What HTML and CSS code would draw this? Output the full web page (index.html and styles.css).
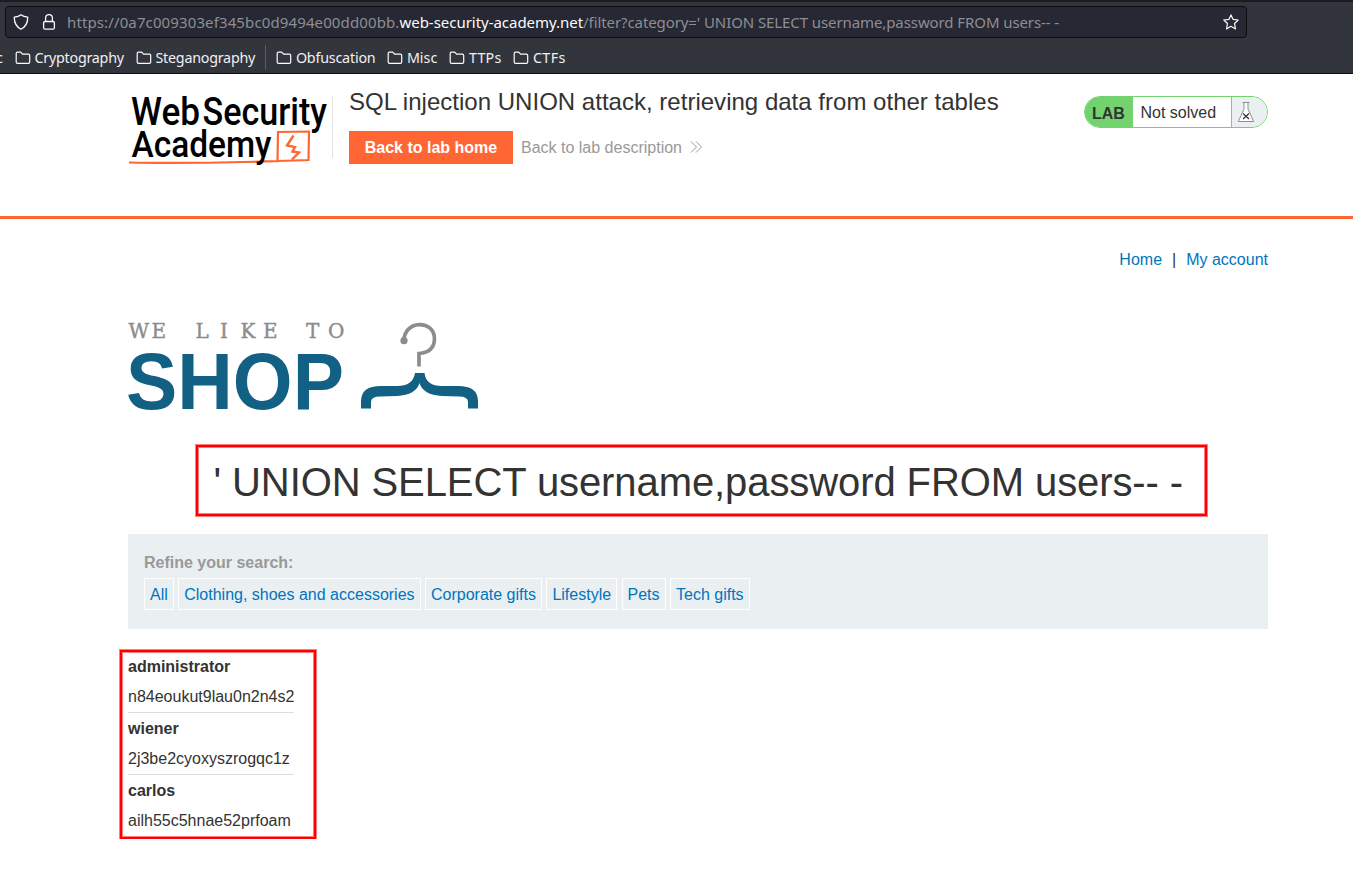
FILE: index.html
```html
<!DOCTYPE html>
<html lang="en">
<head>
<meta charset="utf-8">
<title>SQL injection UNION attack</title>
<link rel="stylesheet" href="styles.css">
</head>
<body>
<svg class="defs" width="0" height="0"><defs>
<symbol id="folder" viewBox="0 0 16 16"><path d="M1.2 12V3.4Q1.2 2.2 2.4 2.2H5.6L7.6 4.2H13.4Q14.7 4.2 14.7 5.5V12Q14.7 13.3 13.4 13.3H2.5Q1.2 13.3 1.2 12Z" fill="none" stroke="#fbfbfe" stroke-width="1.2"/></symbol>
</defs></svg>
<div class="browser">
  <div class="urlbar">
    <svg class="shield" width="16" height="16" viewBox="0 0 16 16"><path d="M8 .8Q10.5 2.8 14.7 3.2Q15 11.5 8 15.2Q1 11.5 1.3 3.2Q5.500 2.800 8 .8Z" fill="none" stroke="#fbfbfe" stroke-width="1.3" stroke-linejoin="round"/></svg>
    <svg class="lock" width="16" height="16" viewBox="0 0 16 16"><rect x="2.600" y="7.500" width="10.800" height="7.700" rx="1.500" fill="none" stroke="#fbfbfe" stroke-width="1.300"/><path d="M4.600 7.500V4A3.400 3.400 0 0 1 11.400 4V7.500" fill="none" stroke="#fbfbfe" stroke-width="1.300"/></svg>
    <span class="url"><span class="u1">https://0a7c009303ef345bc0d9494e00dd00bb.</span><span class="host">web-security-academy.net</span><span class="u2">/filter?category=' UNION SELECT username,password FROM users-- -</span></span>
    <svg class="star" width="16" height="16" viewBox="0 0 16 16"><path d="M8 .9L10.100 5.400L15.200 6L11.500 9.500L12.500 14.900L8 12.300L3.500 14.900L4.500 9.500L.8 6L5.900 5.400Z" fill="none" stroke="#fbfbfe" stroke-width="1.200" stroke-linejoin="round"/></svg>
  </div>
  <div class="bookmarks">
    <span class="cut">c</span>
    <span class="bm b1"><svg><use href="#folder"/></svg>Cryptography</span>
    <span class="bm b2"><svg><use href="#folder"/></svg>Steganography</span>
    <span class="sep"></span>
    <span class="bm b3"><svg><use href="#folder"/></svg>Obfuscation</span>
    <span class="bm b4"><svg><use href="#folder"/></svg>Misc</span>
    <span class="bm b5"><svg><use href="#folder"/></svg>TTPs</span>
    <span class="bm b6"><svg><use href="#folder"/></svg>CTFs</span>
  </div>
</div>
<header class="lab-header">
  <svg class="academy" width="204" height="80" viewBox="128 90 204 80">
    <path d="M129 162.500Q180 163.800 277.500 161.200L278 132L309 131.500L308.500 160L278 161" fill="none" stroke="#ff6633" stroke-width="2.200"/>
    <path d="M293.500 135.500L287 145.500L295 147L292.500 151.500L299 152.500L292 159.500" fill="none" stroke="#ff6633" stroke-width="2.400"/>
    <text class="logo-text" x="131" y="124.700" font-size="38.500" textLength="69" lengthAdjust="spacingAndGlyphs">Web</text>
    <text class="logo-text" x="202.500" y="124.700" font-size="38.500" textLength="124.500" lengthAdjust="spacingAndGlyphs">Security</text>
    <text class="logo-text" x="131.500" y="157" font-size="37.500" textLength="140" lengthAdjust="spacingAndGlyphs">Academy</text>
  </svg>
  <div class="title">
    <h2>SQL injection UNION attack, retrieving data from other tables</h2>
    <div class="actions"><a class="button">Back to lab home</a><a class="desc">Back to lab description</a><svg width="13" height="12" viewBox="0 0 13 12"><path d="M1 .5L6.500 6L1 11.500M6 .5L11.500 6L6 11.500" fill="none" stroke="#999" stroke-width="1"/></svg></div>
  </div>
  <div class="status"><b>LAB</b><span>Not solved</span><i><svg width="18" height="22" viewBox="0 0 18 22"><path d="M5.500 1.500H12.500M7 1.500V8L1.300 20.500H16.700L11 8V1.500" fill="#fff" stroke="#8b8f91" stroke-width="1"/><path d="M6 12.500L12 18M12 12.500L6 18" stroke="#333" stroke-width="1.200"/></svg></i></div>
</header>
<main>
  <nav><a>Home</a><span>|</span><a>My account</a></nav>
  <svg class="shop" width="352" height="92" viewBox="128 320 352 92">
    <text class="tag" x="128.500 151.500 195.500 220 240.500 263 306 328" y="337.500">WELIKETO</text>
    <text class="big" x="126" y="408.500" font-size="80.500" textLength="218" lengthAdjust="spacingAndGlyphs">SHOP</text>
    <path d="M404 340.500C404 320 434.500 319 434.500 339Q434 352.500 419 353.500V366.500" fill="none" stroke="#8c8c8c" stroke-width="3.700"/>
    <circle cx="404" cy="340.700" r="3.600" fill="#8c8c8c"/>
    <path d="M415 373H424.500Q426 386 442 386H458Q478 386 478 401V408.500H468V402Q468 396.500 459 396.500L442 396Q423 395 419.500 383Q416 395 397 396L380 396.500Q371 396.500 371 402V408.500H361V401Q361 386 381 386H397Q413 386 415 373Z" fill="#126084"/>
  </svg>
  <div class="heading marked"><h1>' UNION SELECT username,password FROM users-- -</h1></div>
  <section class="filters">
    <label>Refine your search:</label>
    <div class="chips"><a>All</a><a>Clothing, shoes and accessories</a><a>Corporate gifts</a><a>Lifestyle</a><a>Pets</a><a>Tech gifts</a></div>
  </section>
  <div class="results marked">
    <dl><dt>administrator</dt><dd>n84eoukut9lau0n2n4s2</dd><dt>wiener</dt><dd>2j3be2cyoxyszrogqc1z</dd><dt>carlos</dt><dd>ailh55c5hnae52prfoam</dd></dl>
  </div>
</main>
</body>
</html>
```
FILE: styles.css
```css
* { box-sizing: border-box; }
body { margin: 0; background: #fff; color: #333332; font: 16px/20px "Liberation Sans", Arial, sans-serif; overflow: hidden; }
.defs { position: absolute; }
.browser { height: 74px; background: #33353d; border-top: 2px solid #1c1b22; border-bottom: 1px solid #0c0c0d; padding-top: 4px; font-family: "Noto Sans", sans-serif; color: #fbfbfe; }
.urlbar { width: 1242px; height: 32px; margin-left: 5px; background: #262833; border: 1px solid #0c0c0d; border-radius: 4px; display: flex; align-items: center; padding: 0 7px; }
.urlbar svg { flex: none; }
.lock { margin-left: 12px; }
.url { margin-left: 10px; flex: 1; color: #8d8e95; font-size: 15px; white-space: pre; }
.u1 { letter-spacing: .12px; }
.host { color: #fbfbfe; letter-spacing: -.03px; }
.u2 { letter-spacing: -.09px; }
.bookmarks { height: 35px; display: flex; align-items: center; font-size: 14.300px; white-space: nowrap; padding-top: 4px; color: #f0f0f3; }
.cut { width: 15px; text-indent: -4px; }
.bm { display: flex; align-items: center; gap: 3.500px; }
.bm svg { width: 16px; height: 16px; flex: none; }
.b1 { width: 121px; letter-spacing: -.24px; }
.b2 { width: 129px; letter-spacing: -.24px; }
.sep { width: 1px; height: 25px; background: #5b5c63; margin-right: 10.400px; }
.b3 { width: 111px; letter-spacing: -.2px; }
.b4 { width: 62px; }
.b5 { width: 64px; letter-spacing: .25px; }
.b6 { letter-spacing: .4px; }
.lab-header { height: 145px; border-bottom: 3px solid #ff6633; padding: 16px 85px 0 128px; display: flex; align-items: flex-start; }
.academy { flex: none; }
.logo-text { font-family: Roboto, sans-serif; font-weight: 500; fill: #000; }
.title { border-left: 1px solid #e3e3e3; height: 62px; margin: 6px 0 0; padding-left: 16px; flex: 1; }
h2 { margin: -10px 0 0; font-size: 24px; line-height: 32px; font-weight: 400; white-space: nowrap; letter-spacing: .016px; }
.actions { display: flex; align-items: center; margin-top: 13px; color: #999; }
.button { width: 164px; height: 33px; line-height: 33px; background: #ff6633; color: #fff; font-weight: 700; text-align: center; margin-right: 8px; }
.actions svg { margin: 0 0 2px 8px; }
.status { width: 184px; height: 32px; margin-top: 6px; border: 1px solid #72d36e; border-radius: 16px; display: flex; line-height: 32px; overflow: hidden; }
.status b { width: 48px; background: #72d36e; padding-left: 7px; line-height: 33px; }
.status span { width: 98px; padding-left: 7.500px; line-height: 31px; }
.status i { flex: 1; background: #eaeff2; border-left: 1px solid #72d36e; padding: 4px 0 0 5px; line-height: 0; }
main { width: 1140px; margin-left: 128px; }
nav { height: 101px; padding-top: 31px; display: flex; justify-content: flex-end; gap: 10px; }
nav a, .chips a { color: #0074bd; }
.shop { display: block; overflow: visible; }
.tag { font-family: "DejaVu Serif", serif; font-weight: 200; font-size: 20px; fill: #8c8c8c; stroke: #8c8c8c; stroke-width: .4px; }
.big { font-family: "Liberation Sans", sans-serif; font-weight: 700; fill: #126084; }
.marked { border: 2px solid #ff0000; box-shadow: 0 0 0 1px rgba(255,0,0,.5), inset 0 0 0 1px rgba(255,0,0,.5); }
.heading { width: 1011px; height: 71px; margin: 33px 0 0 68px; padding-left: 15.500px; }
h1 { margin: 0; font-size: 40px; line-height: 70px; font-weight: 400; white-space: nowrap; letter-spacing: -.09px; }
.filters { height: 95px; margin-top: 18px; padding: 19px 16px; background: #eaeff2; }
.filters label { display: block; color: #999; font-weight: 700; }
.chips { display: flex; gap: 4.450px; margin-top: 5px; }
.chips a { height: 32px; line-height: 31px; padding: 0 5px; border: 1px solid #fff; white-space: nowrap; }
.results { width: 196px; height: 189px; margin: 21px 0 0 -8px; padding: 1px 0 0 6px; }
dl { width: 166px; margin: 0; }
dt { font-weight: 700; height: 30px; line-height: 27px; }
dd { margin: 0 0 2px; height: 30px; line-height: 27px; border-bottom: 1px solid #ddd; }
dd:last-child { border: 0; }
```
